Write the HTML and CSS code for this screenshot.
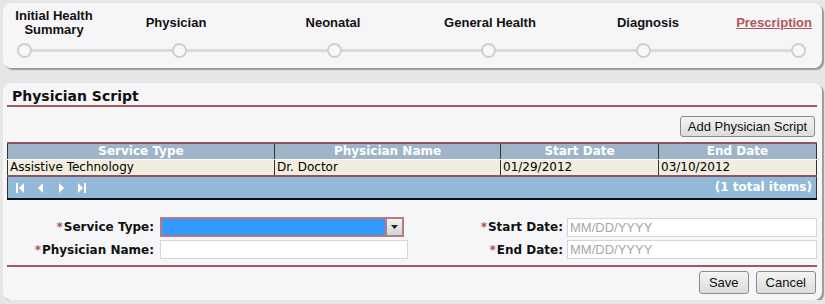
FILE: index.html
```html
<!DOCTYPE html>
<html>
<head>
  <title>Physician Script</title>
  <link rel="stylesheet" href="styles.css">
</head>
<body>

<div class="panel steps">
  <div class="stepLabels">
    <span class="step first">Initial Health<br>Summary</span>
    <span class="step">Physician</span>
    <span class="step">Neonatal</span>
    <span class="step">General Health</span>
    <span class="step">Diagnosis</span>
    <a class="step last current" href="#">Prescription</a>
  </div>
  <div class="track">
    <span class="dot"></span>
    <span class="dot"></span>
    <span class="dot"></span>
    <span class="dot"></span>
    <span class="dot"></span>
    <span class="dot"></span>
  </div>
</div>

<div class="panel script">
  <h2 class="title">Physician Script</h2>

  <div class="toolbar">
    <button class="btn wide">Add Physician Script</button>
  </div>

  <table class="grid">
    <thead>
      <tr>
        <th class="colType">Service Type</th>
        <th class="colName">Physician Name</th>
        <th class="colStart">Start Date</th>
        <th class="colEnd">End Date</th>
      </tr>
    </thead>
    <tbody>
      <tr>
        <td>Assistive Technology</td>
        <td>Dr. Doctor</td>
        <td>01/29/2012</td>
        <td>03/10/2012</td>
      </tr>
    </tbody>
    <tfoot>
      <tr>
        <td colspan="4">
          <div class="pager">
            <span class="pagerIcons">
              <!-- first / prev / next / last -->
              <svg width="8" height="10" viewBox="0 0 8 10"><rect x="0" y="0" width="2" height="10" fill="#fff"/><path d="M8 0 L3 5 L8 10 Z" fill="#fff"/></svg>
              <svg width="6" height="10" viewBox="0 0 6 10"><path d="M5 0 L0 5 L5 10 Z" fill="#fff"/></svg>
              <svg width="6" height="10" viewBox="0 0 6 10"><path d="M1 0 L6 5 L1 10 Z" fill="#fff"/></svg>
              <svg width="8" height="10" viewBox="0 0 8 10"><path d="M0 0 L5 5 L0 10 Z" fill="#fff"/><rect x="6" y="0" width="2" height="10" fill="#fff"/></svg>
            </span>
            <span class="pagerInfo">(1 total items)</span>
          </div>
        </td>
      </tr>
    </tfoot>
  </table>

  <div class="editor">
    <label class="fieldLabel"><span class="req">*</span>Service Type:</label>
    <div class="select">
      <span class="selectValue"></span>
      <span class="selectArrow"><svg width="7" height="4" viewBox="0 0 7 4"><path d="M0 0 L7 0 L3.5 4 Z" fill="#222"/></svg></span>
    </div>
    <label class="fieldLabel right"><span class="req">*</span>Start Date:</label>
    <input class="textBox" type="text" placeholder="MM/DD/YYYY">

    <label class="fieldLabel"><span class="req">*</span>Physician Name:</label>
    <input class="textBox short" type="text">
    <label class="fieldLabel right"><span class="req">*</span>End Date:</label>
    <input class="textBox" type="text" placeholder="MM/DD/YYYY">
  </div>

  <div class="actions">
    <button class="btn">Save</button>
    <button class="btn">Cancel</button>
  </div>
</div>

</body>
</html>
```

FILE: styles.css
```css
body {
  margin: 0;
  padding: 3px 3px 0 3px;
  background-color: #e6e6e6;
  font-family: "DejaVu Sans", Tahoma, sans-serif;
}

.panel {
  background-color: #f6f6f8;
  border-radius: 8px;
  box-shadow: 2px 2px 1px #9a9a9a;
}

/* wizard steps */
.steps {
  height: 65px;
  padding: 0 16px 0 14px;
}

.stepLabels {
  display: grid;
  grid-template-columns: 88px 156px 158px 156px 160px 1fr;
  height: 36px;
  padding-top: 2px;
  margin: 0 -6px 0 -7px;
  align-items: center;
  font-family: "Liberation Sans", Arial, sans-serif;
  font-size: 13px;
  font-weight: bold;
  color: #111;
}

.step {
  text-align: center;
  line-height: 14px;
}

.step.last {
  text-align: right;
}

.step.current {
  color: #b0575a;
}

.track {
  display: flex;
  justify-content: space-between;
  align-items: center;
  height: 16px;
  margin-top: 1px;
  background: linear-gradient(#dadada, #dadada) no-repeat center / 100% 3px;
}

.dot {
  width: 11px;
  height: 11px;
  border: 2px solid #cfcfcf;
  border-radius: 50%;
  background-color: #f8f8f8;
}

/* physician script panel */
.script {
  margin-top: 15px;
  padding: 0 5px 6px 4px;
  height: 211px;
}

.title {
  margin: 0;
  padding: 5px 5px 1px;
  font-size: 14px;
  font-weight: bold;
  color: #111;
  border-bottom: 2px solid #a0585a;
}

.toolbar {
  display: flex;
  justify-content: flex-end;
  margin: 9px 2px 5px 0;
}

.btn {
  font-family: "Liberation Sans", Arial, sans-serif;
  font-size: 13px;
  color: #111;
  height: 23px;
  padding: 0 9px;
  border: 1px solid #8a8a8a;
  border-radius: 3px;
  background: linear-gradient(#f4f4f4, #dcdcdc);
  cursor: pointer;
}

.btn.wide {
  height: 21px;
  padding: 0 7px;
}

.grid {
  width: 100%;
  border-collapse: collapse;
  font-size: 12px;
  border-left: 1px solid #333;
  border-right: 1px solid #333;
}

.grid th {
  background-color: #9fb4c9;
  color: #fff;
  font-weight: bold;
  padding: 0 2px;
  height: 15px;
  line-height: 15px;
  border-top: 2px solid #8c5465;
  border-left: 1px solid #333;
  border-bottom: 1px solid #fff;
}

.grid td {
  background-color: #f3ede0;
  padding: 0 2px;
  height: 15px;
  line-height: 15px;
  border-left: 1px solid #333;
  border-bottom: 2px solid #8c5465;
  text-align: left;
}

.colType { width: 262px; }
.colName { width: 221px; }
.colStart { width: 153px; }

.grid tfoot td {
  background-color: #93b9d8;
  border-bottom: 2px solid #111;
  height: 21px;
  padding: 0 4px 0 8px;
}

.pager {
  display: flex;
  justify-content: space-between;
  align-items: center;
}

.pagerIcons {
  display: flex;
  align-items: center;
  gap: 14px;
}

.pagerIcons svg {
  display: block;
}

.pagerInfo {
  color: #fff;
  font-weight: bold;
}

/* edit form */
.editor {
  display: grid;
  grid-template-columns: 153px 248px 159px 250px;
  row-gap: 3px;
  align-items: center;
  margin-top: 17px;
  padding-bottom: 6px;
  border-bottom: 2px solid #a0585a;
  font-size: 12px;
}

.fieldLabel {
  text-align: right;
  padding-right: 6px;
  font-weight: bold;
  color: #111;
}

.fieldLabel.right {
  padding-right: 4px;
}

.req {
  color: #a0585a;
  margin-right: 1px;
}

.select {
  display: flex;
  width: 244px;
  height: 20px;
  box-sizing: border-box;
  border: 2px solid #b57c80;
  background-color: #fff;
}

.selectValue {
  flex: 1;
  background-color: #3399ff;
}

.selectArrow {
  display: flex;
  align-items: center;
  justify-content: center;
  width: 15px;
  background: linear-gradient(#f2f2f2, #d4d4d4);
  border-left: 2px solid #b57c80;
}

.textBox {
  height: 19px;
  box-sizing: border-box;
  width: 100%;
  border: 1px solid #d6d6d6;
  background-color: #fff;
  padding: 0 2px;
  font-family: "Liberation Sans", Arial, sans-serif;
  font-size: 13px;
}

.textBox.short {
  width: 248px;
}

.textBox::placeholder {
  color: #a6a6a6;
}

.actions {
  display: flex;
  justify-content: flex-end;
  gap: 7px;
  margin-top: 4px;
  padding-right: 1px;
}
```
